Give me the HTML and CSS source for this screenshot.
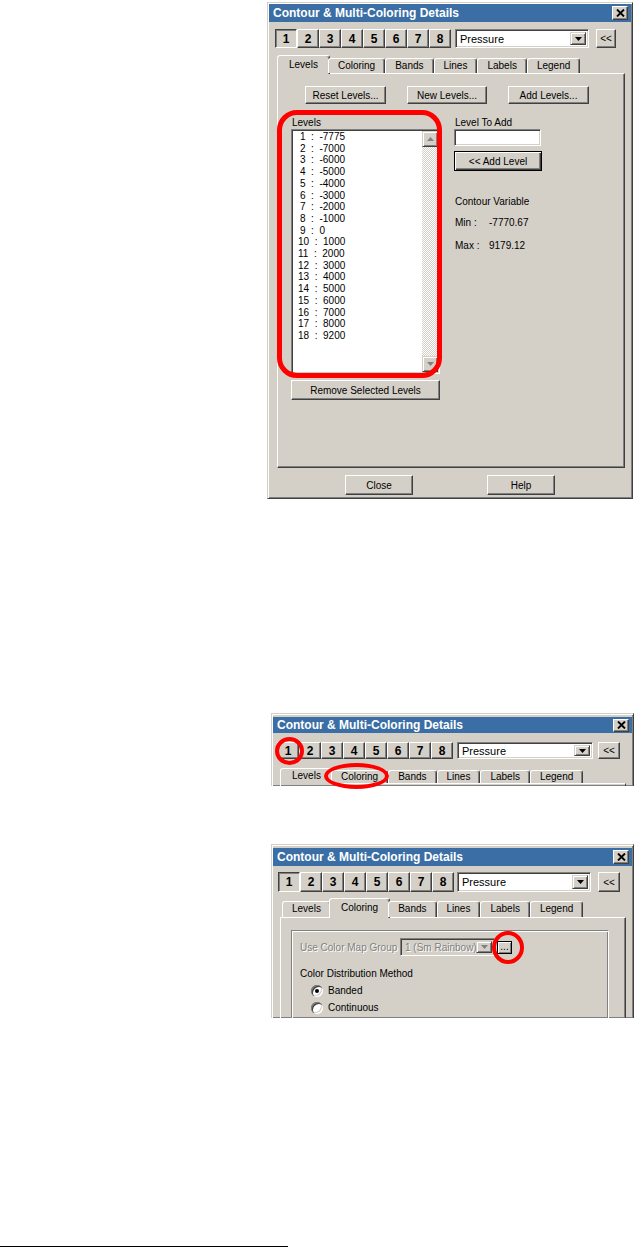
FILE: index.html
```html
<!DOCTYPE html>
<html lang="en">
  <head>
    <meta charset="UTF-8" />
    <meta name="viewport" content="width=device-width, initial-scale=1.0" />
    <title>Contour &amp; Multi-Coloring Details</title>
    <link rel="stylesheet" href="styles.css">
  </head>
  <body>
    <div class="page">
      <!-- Full dialog, Levels tab -->
      <section class="dialog dialog-levels">
        <div class="titlebar">
          <span>Contour &amp; Multi-Coloring Details</span>
          <span class="title-close">
            <svg width="9" height="8" viewBox="0 0 9 8"><path d="M1 0.5L8 7.5M8 0.5L1 7.5" stroke="#000" stroke-width="1.9" /></svg>
          </span>
        </div>
        <div class="toolbar">
          <div class="num-group">
            <button class="btn num pressed">1</button>
            <button class="btn num">2</button>
            <button class="btn num">3</button>
            <button class="btn num">4</button>
            <button class="btn num">5</button>
            <button class="btn num">6</button>
            <button class="btn num">7</button>
            <button class="btn num">8</button>
          </div>
          <div class="combo">
            <span class="combo-text">Pressure</span>
            <span class="combo-arrow">
              <svg width="7" height="4" viewBox="0 0 7 4"><path d="M0 0H7L3.5 4Z" /></svg>
            </span>
          </div>
          <button class="btn collapse">&lt;&lt;</button>
        </div>
        <div class="tabs">
          <span class="tab active">Levels</span>
          <span class="tab">Coloring</span>
          <span class="tab">Bands</span>
          <span class="tab">Lines</span>
          <span class="tab">Labels</span>
          <span class="tab">Legend</span>
        </div>
        <div class="panel">
          <div class="action-row">
            <button class="btn action">Reset Levels...</button>
            <button class="btn action">New Levels...</button>
            <button class="btn action">Add Levels...</button>
          </div>
          <div class="levels-area">
            <div class="levels-col">
              <div class="mark mark-levels"></div>
              <div class="field-label">Levels</div>
              <div class="listbox">
                <ul class="level-list">
                  <li>1  :  -7775</li>
                  <li>2  :  -7000</li>
                  <li>3  :  -6000</li>
                  <li>4  :  -5000</li>
                  <li>5  :  -4000</li>
                  <li>6  :  -3000</li>
                  <li>7  :  -2000</li>
                  <li>8  :  -1000</li>
                  <li>9  :  0</li>
                  <li class="wide-num">10  :  1000</li>
                  <li class="wide-num">11  :  2000</li>
                  <li class="wide-num">12  :  3000</li>
                  <li class="wide-num">13  :  4000</li>
                  <li class="wide-num">14  :  5000</li>
                  <li class="wide-num">15  :  6000</li>
                  <li class="wide-num">16  :  7000</li>
                  <li class="wide-num">17  :  8000</li>
                  <li class="wide-num">18  :  9200</li>
                </ul>
                <div class="scrollbar">
                  <span class="scroll-btn">
                    <svg width="7" height="4" viewBox="0 0 7 4"><path d="M3.5 0L7 4H0Z" /></svg>
                  </span>
                  <span class="scroll-track"></span>
                  <span class="scroll-btn">
                    <svg width="7" height="4" viewBox="0 0 7 4"><path d="M0 0H7L3.5 4Z" /></svg>
                  </span>
                </div>
              </div>
              <button class="btn remove-btn">Remove Selected Levels</button>
            </div>
            <div class="add-col">
              <div class="field-label">Level To Add</div>
              <div class="text-input"></div>
              <button class="btn add-btn">&lt;&lt; Add Level</button>
              <div class="var-title">Contour Variable</div>
              <div class="stat-row stat-min"><span class="stat-name">Min :</span><span>-7770.67</span></div>
              <div class="stat-row stat-max"><span class="stat-name">Max :</span><span>9179.12</span></div>
            </div>
          </div>
        </div>
        <div class="dialog-footer">
          <button class="btn footer-btn">Close</button>
          <button class="btn footer-btn">Help</button>
        </div>
      </section>

      <!-- Cropped dialog: header only -->
      <section class="dialog dialog-crop dialog-header">
        <div class="titlebar">
          <span>Contour &amp; Multi-Coloring Details</span>
          <span class="title-close">
            <svg width="9" height="8" viewBox="0 0 9 8"><path d="M1 0.5L8 7.5M8 0.5L1 7.5" stroke="#000" stroke-width="1.9" /></svg>
          </span>
        </div>
        <div class="toolbar">
          <div class="num-group">
            <button class="btn num">1</button>
            <button class="btn num">2</button>
            <button class="btn num">3</button>
            <button class="btn num">4</button>
            <button class="btn num">5</button>
            <button class="btn num">6</button>
            <button class="btn num">7</button>
            <button class="btn num">8</button>
          </div>
          <div class="combo">
            <span class="combo-text">Pressure</span>
            <span class="combo-arrow">
              <svg width="7" height="4" viewBox="0 0 7 4"><path d="M0 0H7L3.5 4Z" /></svg>
            </span>
          </div>
          <button class="btn collapse">&lt;&lt;</button>
        </div>
        <div class="tabs">
          <span class="tab active">Levels</span>
          <span class="tab">Coloring</span>
          <span class="tab">Bands</span>
          <span class="tab">Lines</span>
          <span class="tab">Labels</span>
          <span class="tab">Legend</span>
        </div>
        <div class="panel panel-stub"></div>
        <div class="mark mark-one"></div>
        <div class="mark mark-coloring"></div>
      </section>

      <!-- Cropped dialog: Coloring tab -->
      <section class="dialog dialog-crop dialog-coloring">
        <div class="titlebar">
          <span>Contour &amp; Multi-Coloring Details</span>
          <span class="title-close">
            <svg width="9" height="8" viewBox="0 0 9 8"><path d="M1 0.5L8 7.5M8 0.5L1 7.5" stroke="#000" stroke-width="1.9" /></svg>
          </span>
        </div>
        <div class="toolbar">
          <div class="num-group">
            <button class="btn num pressed">1</button>
            <button class="btn num">2</button>
            <button class="btn num">3</button>
            <button class="btn num">4</button>
            <button class="btn num">5</button>
            <button class="btn num">6</button>
            <button class="btn num">7</button>
            <button class="btn num">8</button>
          </div>
          <div class="combo">
            <span class="combo-text">Pressure</span>
            <span class="combo-arrow">
              <svg width="7" height="4" viewBox="0 0 7 4"><path d="M0 0H7L3.5 4Z" /></svg>
            </span>
          </div>
          <button class="btn collapse">&lt;&lt;</button>
        </div>
        <div class="tabs">
          <span class="tab">Levels</span>
          <span class="tab active">Coloring</span>
          <span class="tab">Bands</span>
          <span class="tab">Lines</span>
          <span class="tab">Labels</span>
          <span class="tab">Legend</span>
        </div>
        <div class="panel">
          <div class="group-box">
            <div class="map-row">
              <span class="disabled-text">Use Color Map Group</span>
              <div class="combo combo-disabled">
                <span class="combo-text">1 (Sm Rainbow)</span>
                <span class="combo-arrow">
                  <svg width="7" height="4" viewBox="0 0 7 4"><path d="M0 0H7L3.5 4Z" /></svg>
                </span>
              </div>
              <button class="btn dots-btn">...</button>
            </div>
            <div class="method-title">Color Distribution Method</div>
            <div class="radio-row"><span class="radio checked"></span>Banded</div>
            <div class="radio-row"><span class="radio"></span>Continuous</div>
          </div>
        </div>
        <div class="mark mark-dots"></div>
      </section>

      <hr class="footnote-rule">
    </div>
  </body>
</html>
```

FILE: styles.css
```css
/* Windows classic look */
body {
  margin: 0;
  background: #fff;
  color: #000;
  font-family: "Liberation Sans", Arial, sans-serif;
  font-size: 10px;
}

.page {
  padding-top: 2px;
  display: flex;
  flex-direction: column;
}

/* Dialog frame */
.dialog {
  --title-h: 18px;
  --tool-gap: 7px;
  --tool-pad: 6px;
  --btn-h: 19px;
  --combo-gap: 4px;
  --combo-w: 134px;
  --collapse-gap: 7px;
  --collapse-w: 20px;
  --panel-left: 8px;
  --panel-w: 348px;

  position: relative;
  box-sizing: border-box;
  background: #d4d0c8;
  border: 1px solid;
  border-color: #d4d0c8 #404040 #404040 #d4d0c8;
  box-shadow: inset 1px 1px #fff, inset -1px -1px #808080;
  padding: 1px;
}

.dialog-levels {
  margin-left: 267px;
  width: 366px;
}

.dialog-crop {
  margin-left: 271px;
  width: 363px;
  padding: 3px 1px 0;
  border-bottom: 0;
}

.dialog-header {
  --title-h: 16px;
  --tool-gap: 9px;
  --tool-pad: 4px;
  --btn-h: 17px;
  --combo-w: 136px;
  --collapse-gap: 5px;
  --collapse-w: 22px;
  --panel-left: 7px;
  --panel-w: 346px;
  margin-top: 214px;
}

.dialog-coloring {
  --title-h: 18px;
  --tool-gap: 6px;
  --tool-pad: 5px;
  --btn-h: 20px;
  --combo-gap: 3px;
  --combo-w: 134px;
  --collapse-gap: 7px;
  --collapse-w: 22px;
  --panel-left: 7px;
  --panel-w: 346px;
  margin-top: 58px;
  height: 174px;
  overflow: hidden;
}

.titlebar {
  height: var(--title-h);
  display: flex;
  align-items: center;
  justify-content: space-between;
  padding: 0 3px 0 4px;
  background: #3a6ea5;
  color: #fff;
  font: bold 12px "Liberation Sans", Arial, sans-serif;
}

.title-close {
  width: 16px;
  height: 14px;
  box-sizing: border-box;
  display: flex;
  align-items: center;
  justify-content: center;
  background: #d4d0c8;
  border: 1px solid;
  border-color: #fff #404040 #404040 #fff;
  box-shadow: inset -1px -1px #808080;
}

.dialog-header .title-close {
  height: 13px;
}

/* Generic raised button */
.btn {
  box-sizing: border-box;
  margin: 0;
  padding: 0;
  font: inherit;
  color: #000;
  background: #d4d0c8;
  border: 1px solid;
  border-color: #fff #404040 #404040 #fff;
  box-shadow: inset -1px -1px #808080;
}

/* Toolbar */
.toolbar {
  display: flex;
  align-items: center;
  height: var(--btn-h);
  margin-top: var(--tool-gap);
  padding-left: var(--tool-pad);
}

.num-group {
  display: flex;
}

.num {
  width: 22px;
  height: var(--btn-h);
  font: bold 12px "Liberation Sans", Arial, sans-serif;
}

.num.pressed {
  border-color: #404040 #fff #fff #404040;
  box-shadow: inset 1px 1px #808080;
}

.combo {
  box-sizing: border-box;
  display: flex;
  align-items: center;
  margin-left: var(--combo-gap);
  width: var(--combo-w);
  height: var(--btn-h);
  padding: 2px;
  background: #fff;
  border: 1px solid;
  border-color: #808080 #fff #fff #808080;
  box-shadow: inset 1px 1px #404040, inset -1px -1px #d4d0c8;
  font-size: 11px;
}

.combo-text {
  flex: 1;
  padding-left: 2px;
  white-space: nowrap;
  overflow: hidden;
}

.combo-arrow {
  box-sizing: border-box;
  width: 16px;
  height: 100%;
  display: flex;
  align-items: center;
  justify-content: center;
  background: #d4d0c8;
  border: 1px solid;
  border-color: #d4d0c8 #404040 #404040 #d4d0c8;
  box-shadow: inset 1px 1px #fff, inset -1px -1px #808080;
}

.collapse {
  margin-left: var(--collapse-gap);
  width: var(--collapse-w);
  height: var(--btn-h);
}

/* Tabs */
.tabs {
  position: relative;
  z-index: 1;
  display: flex;
  align-items: flex-end;
  height: 18px;
  margin: 7px 0 0 var(--panel-left);
  padding-left: 2px;
}

.dialog-header .tabs {
  height: 15px;
  margin-top: 9px;
}

.dialog-coloring .tabs {
  height: 19px;
  margin-top: 6px;
}

.tab {
  box-sizing: border-box;
  height: 15px;
  padding: 0 9px;
  line-height: 13px;
  background: #d4d0c8;
  border: 1px solid;
  border-bottom: 0;
  border-color: #fff #404040 transparent #fff;
  border-radius: 3px 3px 0 0;
  box-shadow: inset -1px 0 #808080;
}

.tab.active {
  height: 19px;
  margin: 0 -2px -1px;
  padding: 2px 11px 0;
}

.dialog-header .tab {
  height: 13px;
  line-height: 12px;
}

.dialog-header .tab.active {
  height: 16px;
  padding-top: 1px;
}

.dialog-coloring .tab {
  height: 16px;
  line-height: 14px;
}

.dialog-coloring .tab.active {
  height: 20px;
  padding-top: 2px;
}

/* Tab page */
.panel {
  box-sizing: border-box;
  margin-left: var(--panel-left);
  width: var(--panel-w);
  height: 395px;
  padding: 12px 0 0 13px;
  border: 1px solid;
  border-color: #fff #404040 #404040 #fff;
  box-shadow: inset -1px -1px #808080;
}

.panel-stub {
  height: 3px;
  padding: 0;
  border-bottom: 0;
  box-shadow: none;
}

.dialog-coloring .panel {
  height: 120px;
  padding: 12px 0 0 10px;
}

.action-row {
  display: flex;
  gap: 21px;
  margin-left: 14px;
}

.action {
  width: 81px;
  height: 18px;
}

.action:nth-child(2) {
  width: 80px;
}

.levels-area {
  display: flex;
  gap: 14px;
  margin-top: 12px;
}

.levels-col {
  position: relative;
  width: 149px;
}

.field-label {
  height: 13px;
  line-height: 13px;
  padding-left: 1px;
}

.listbox {
  box-sizing: border-box;
  display: flex;
  height: 245px;
  padding: 1px;
  background: #fff;
  border: 1px solid;
  border-color: #808080 #fff #fff #808080;
  box-shadow: inset 1px 1px #404040, inset -1px -1px #d4d0c8;
}

.level-list {
  flex: 1;
  margin: 0;
  padding: 0 0 0 7px;
  list-style: none;
  line-height: 11.7px;
}

.level-list li {
  white-space: pre;
}

.level-list .wide-num {
  margin-left: -2px;
}

.scrollbar {
  width: 16px;
  display: flex;
  flex-direction: column;
  background: repeating-conic-gradient(#fff 0 25%, #d4d0c8 0 50%) 0 0 / 2px 2px;
}

.scroll-btn {
  box-sizing: border-box;
  height: 16px;
  display: flex;
  align-items: center;
  justify-content: center;
  background: #d4d0c8;
  border: 1px solid;
  border-color: #d4d0c8 #404040 #404040 #d4d0c8;
  box-shadow: inset 1px 1px #fff, inset -1px -1px #808080;
  fill: #808080;
}

.scroll-track {
  flex: 1;
}

.remove-btn {
  margin-top: 6px;
  width: 149px;
  height: 20px;
}

.add-col {
  display: flex;
  flex-direction: column;
  align-items: flex-start;
}

.text-input {
  box-sizing: border-box;
  width: 87px;
  height: 17px;
  background: #fff;
  border: 1px solid;
  border-color: #808080 #fff #fff #808080;
  box-shadow: inset 1px 1px #404040, inset -1px -1px #d4d0c8;
}

.add-btn {
  margin-top: 5px;
  width: 88px;
  height: 20px;
  border-color: #000;
  box-shadow: inset 1px 1px #fff, inset -1px -1px #404040, inset -2px -2px #808080;
}

.var-title {
  margin-top: 24px;
  padding-left: 1px;
  line-height: 13px;
}

.stat-row {
  display: flex;
  padding-left: 1px;
  line-height: 13px;
}

.stat-min {
  margin-top: 8px;
}

.stat-max {
  margin-top: 10px;
}

.stat-name {
  width: 34px;
}

.dialog-footer {
  display: flex;
  justify-content: center;
  gap: 74px;
  padding: 7px 0 2px;
}

.footer-btn {
  width: 68px;
  height: 20px;
}

/* Coloring tab contents */
.group-box {
  box-sizing: border-box;
  width: 318px;
  height: 200px;
  padding: 7px 0 0 8px;
  border: 1px solid;
  border-color: #808080 #fff #fff #808080;
  box-shadow: inset 1px 1px #fff, inset -1px -1px #808080;
}

.map-row {
  display: flex;
  align-items: center;
  height: 18px;
}

.disabled-text {
  width: 100px;
  flex: none;
  white-space: nowrap;
  color: #808080;
  text-shadow: 1px 1px #fff;
}

.combo-disabled {
  margin-left: 0;
  width: 95px;
  height: 18px;
  background: #d4d0c8;
  color: #808080;
  text-shadow: 1px 1px #fff;
  font-size: 10px;
}

.combo-disabled .combo-arrow {
  fill: #808080;
}

.dots-btn {
  margin-left: 2px;
  width: 15px;
  height: 13px;
  line-height: 8px;
  border-color: #000;
  box-shadow: inset 1px 1px #fff, inset -1px -1px #808080;
}

.method-title {
  margin-top: 11px;
  line-height: 13px;
}

.radio-row {
  display: flex;
  align-items: center;
  gap: 5px;
  height: 13px;
  margin: 4px 0 0 11px;
}

.radio-row + .radio-row {
  margin-top: 4px;
}

.radio {
  position: relative;
  width: 12px;
  height: 12px;
  border-radius: 50%;
  background: #fff;
  box-shadow: inset 1px 1px #808080, inset 2px 2px #404040, inset -1px -1px #fff, inset -2px -2px #d4d0c8;
}

.radio.checked::after {
  content: "";
  position: absolute;
  left: 4px;
  top: 4px;
  width: 4px;
  height: 4px;
  border-radius: 50%;
  background: #000;
}

/* Red annotation marks */
.mark {
  position: absolute;
  box-sizing: border-box;
  border: 4px solid #f00;
  border-radius: 50%;
  pointer-events: none;
  z-index: 2;
}

.mark-levels {
  left: -14px;
  top: -6px;
  width: 165px;
  height: 268px;
  border-width: 5px;
  border-radius: 20px;
}

.mark-one {
  left: 3px;
  top: 23px;
  width: 29px;
  height: 28px;
}

.mark-coloring {
  left: 52px;
  top: 49px;
  width: 65px;
  height: 26px;
}

.mark-dots {
  left: 220px;
  top: 86px;
  width: 32px;
  height: 33px;
}

.footnote-rule {
  width: 288px;
  height: 0;
  margin: 228px 0 0;
  border: 0;
  border-top: 1px solid #000;
}
```
